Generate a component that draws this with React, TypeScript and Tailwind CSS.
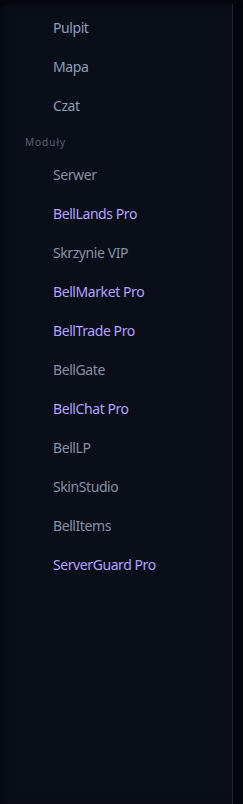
import React from "react";

const top = [
  { t: "Pulpit", p: false },
  { t: "Mapa", p: false },
  { t: "Czat", p: false },
];
const mods = [
  { t: "Serwer", p: false, g: true },
  { t: "BellLands Pro", p: true },
  { t: "Skrzynie VIP", p: false, g: true },
  { t: "BellMarket Pro", p: true },
  { t: "BellTrade Pro", p: true },
  { t: "BellGate", p: false, g: true },
  { t: "BellChat Pro", p: true },
  { t: "BellLP", p: false, g: true },
  { t: "SkinStudio", p: false, g: true },
  { t: "BellItems", p: false, g: true },
  { t: "ServerGuard Pro", p: true },
];

function Item({ t, p, g }: { t: string; p: boolean; g?: boolean }) {
  return (
    <div
      className={
        "h-[39px] flex items-center pl-[53px] text-[14px] tracking-[-0.03em] " +
        (p ? "text-[#b3a2ff]" : g ? "text-[#8791a3]" : "text-[#8e9cb8]")
      }
    >
      {t}
    </div>
  );
}

export default function App() {
  return (
    <div
      className="w-[243px] h-[804px] bg-[#05060c] flex pt-[4px] overflow-hidden"
      style={{ fontFamily: '"Noto Sans", "Open Sans", sans-serif' }}
    >
      <div className="w-[233px] h-full bg-[#0a0e19] border-r border-[#1f2838] rounded-tl-[6px] pt-[4px] shadow-[inset_6px_0_8px_-4px_rgba(0,0,0,0.6)] flex flex-col">
        {top.map((i) => (
          <Item key={i.t} {...i} />
        ))}
        <div className="pl-[25px] mt-[11px] mb-[7px] h-[12px] leading-[12px] text-[10px] tracking-[0.1em] text-[#5a6375]">
          Moduły
        </div>
        {mods.map((i) => (
          <Item key={i.t} {...i} />
        ))}
      </div>
      <div className="flex-1 bg-[#03050d]" />
    </div>
  );
}
